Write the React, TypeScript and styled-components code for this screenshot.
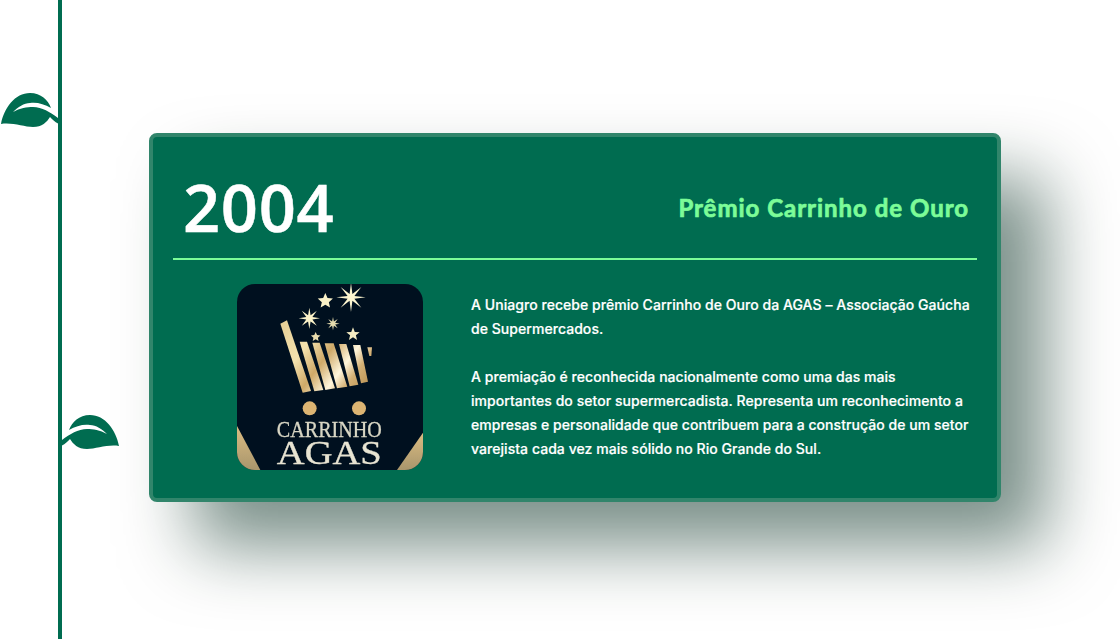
import React from "react";
import styled, { createGlobalStyle } from "styled-components";

const Global = createGlobalStyle`
  html, body { margin: 0; padding: 0; background: #fff; overflow: hidden; }
  #root { width: 1120px; height: 639px; }
`;

const Page = styled.main`
  width: 1120px;
  height: 639px;
  display: flex;
  overflow: hidden;
  background: #fff;
`;

const Rail = styled.div`
  position: relative;
  flex: none;
  width: 4px;
  height: 639px;
  margin-left: 58px;
  background: #006c50;
`;

const Leaf = styled.svg<{ $side: "left" | "right"; $top: number }>`
  position: absolute;
  top: ${(p) => p.$top}px;
  left: ${(p) => (p.$side === "left" ? -58 : 2)}px;
  width: 60px;
  height: 38px;
  transform: ${(p) => (p.$side === "right" ? "scaleX(-1)" : "none")};
`;

const Card = styled.article`
  flex: none;
  box-sizing: border-box;
  width: 852px;
  height: 369px;
  margin: 133px 0 0 87px;
  padding: 0 20px;
  background: #006c50;
  border: 4px solid #31856b;
  border-radius: 8px;
  box-shadow: 45px 45px 70px rgba(0, 42, 28, 0.52);
`;

const Header = styled.header`
  box-sizing: border-box;
  height: 123px;
  display: flex;
  align-items: center;
  justify-content: space-between;
  padding: 19px 8px 0 10px;
  border-bottom: 2px solid #7cfc98;
`;

const Year = styled.h2`
  margin: 0;
  font: 600 65px/1 "Open Sans", sans-serif;
  letter-spacing: 0.7px;
  -webkit-text-stroke: 0.5px #fff;
  color: #fff;
`;

const Title = styled.h3`
  margin: 2px 0 0;
  font: 700 24px/1 Lato, sans-serif;
  letter-spacing: 0.98px;
  -webkit-text-stroke: 0.7px #7cfc98;
  color: #7cfc98;
`;

const Body = styled.div`
  display: flex;
  padding: 24px 0 0 64px;
  gap: 48px;
`;

const Logo = styled.svg`
  flex: none;
  display: block;
  width: 186px;
  height: 186px;
  border-radius: 18px;
`;

const Copy = styled.div`
  flex: none;
  box-sizing: border-box;
  width: 503px;
  padding-top: 9px;
  font: 500 14px/24px Inter, sans-serif;
  letter-spacing: 0.05px;
  -webkit-text-stroke: 0.2px #fff;
  color: #fff;
`;

const Para = styled.p`
  margin: 0 0 24px;
`;

const leafPath =
  "M1 124 C4 108 15 93 30 93 C41 93 48 100 51 108 C44 104 37 102 30 103 C24 103 18 107 13 112 C20 108 27 107 33 107 C42 107 50 112 58 118 L58 123.5 C55 122 52 119 50 117 C47 122 42 127 33 127 C24 127 12 122 1 124 Z";

function LeafIcon({ side, top }: { side: "left" | "right"; top: number }) {
  return (
    <Leaf $side={side} $top={top} viewBox="0 92 60 38" aria-hidden="true">
      <path fill="#006c50" d={leafPath} />
    </Leaf>
  );
}

function star(cx: number, cy: number, r: number, inner: number, n: number) {
  const pts: string[] = [];
  for (let i = 0; i < n * 2; i++) {
    const a = (Math.PI * i) / n - Math.PI / 2;
    const rad = i % 2 === 0 ? r : inner;
    pts.push(`${(cx + rad * Math.cos(a)).toFixed(1)},${(cy + rad * Math.sin(a)).toFixed(1)}`);
  }
  return pts.join(" ");
}

const stripes = [
  "130,119 150,109 222,321 197,326",
  "188,173 210,173 259,318 232,322",
  "226,176 248,176 294,313 265,318",
  "263,178 290,178 331,308 300,313",
  "306,180 328,180 364,302 338,307",
  "348,183 370,183 393,293 372,298",
  "391,190 405,190 403,216 397,216",
];

function CartLogo() {
  return (
    <Logo viewBox="0 0 558 558" role="img" aria-label="Carrinho AGAS">
      <defs>
        <linearGradient id="gold" x1="0" y1="0" x2="0" y2="1">
          <stop offset="0" stopColor="#dcbc82" />
          <stop offset="1" stopColor="#a8966c" />
        </linearGradient>
        <linearGradient id="cart" gradientUnits="userSpaceOnUse" x1="130" y1="120" x2="400" y2="320">
          <stop offset="0" stopColor="#e6cf96" />
          <stop offset="0.3" stopColor="#f4e2ae" />
          <stop offset="0.5" stopColor="#cfa968" />
          <stop offset="0.68" stopColor="#fff6dc" />
          <stop offset="0.8" stopColor="#d4b074" />
          <stop offset="1" stopColor="#b48c4e" />
        </linearGradient>
        <filter id="soft" x="-5%" y="-5%" width="110%" height="110%">
          <feGaussianBlur stdDeviation="1.6" />
        </filter>
      </defs>
      <rect width="558" height="558" fill="#00101f" />
      <g filter="url(#soft)">
        <polygon fill="#fdf6d0" points={star(342, 40, 44, 11, 8)} />
        <polygon fill="#fbf2c8" points={star(265, 51, 24, 11, 5)} />
        <polygon fill="#fbf2c8" points={star(217, 103, 32, 10, 8)} />
        <polygon fill="#e6dcae" points={star(288, 119, 20, 7, 8)} />
        <polygon fill="#f5ecc2" points={star(348, 151, 21, 9, 5)} />
        <polygon fill="#e9dcae" points={star(236, 159, 15, 7, 5)} />
        {stripes.map((p) => (
          <polygon key={p} points={p} fill="url(#cart)" />
        ))}
        <circle cx="218" cy="373" r="21" fill="#dcb472" />
        <circle cx="366" cy="373" r="21" fill="#dcb472" />
        <polygon fill="url(#gold)" points="0,426 0,558 70,558" />
        <polygon fill="url(#gold)" points="558,446 558,558 480,558" />
        <text x="277" y="459" textAnchor="middle" fontFamily="'Liberation Serif', serif" fontSize="70" fill="#d8d6c4" stroke="#d8d6c4" strokeWidth="1" textLength="315" lengthAdjust="spacingAndGlyphs">
          CARRINHO
        </text>
        <text x="277" y="541" textAnchor="middle" fontFamily="'Liberation Serif', serif" fontSize="103" fill="#e8e4d2" stroke="#e8e4d2" strokeWidth="1" textLength="315" lengthAdjust="spacingAndGlyphs">
          AGAS
        </text>
      </g>
    </Logo>
  );
}

export default function App() {
  return (
    <Page>
      <Global />
      <Rail>
        <LeafIcon side="left" top={92} />
        <LeafIcon side="right" top={414} />
      </Rail>
      <Card>
        <Header>
          <Year>2004</Year>
          <Title>Prêmio Carrinho de Ouro</Title>
        </Header>
        <Body>
          <CartLogo />
          <Copy>
            <Para>
              A Uniagro recebe prêmio Carrinho de Ouro da AGAS – Associação Gaúcha de Supermercados.
            </Para>
            <Para>
              A premiação é reconhecida nacionalmente como uma das mais importantes do setor
              supermercadista. Representa um reconhecimento a empresas e personalidade que
              contribuem para a construção de um setor varejista cada vez mais sólido no Rio Grande
              do Sul.
            </Para>
          </Copy>
        </Body>
      </Card>
    </Page>
  );
}
